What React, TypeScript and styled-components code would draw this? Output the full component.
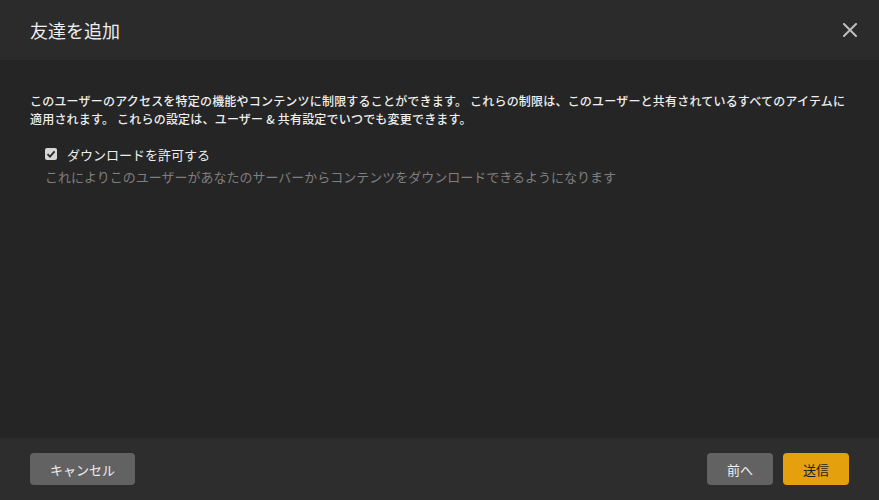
import React from 'react';
import styled, { createGlobalStyle } from 'styled-components';

const GlobalStyle = createGlobalStyle`
  html, body {
    margin: 0;
    padding: 0;
    background: #252525;
  }
  body {
    font-family: "Noto Sans CJK JP", "Noto Sans", sans-serif;
  }
`;

const App: React.FC = () => {
  return (
    <>
      <GlobalStyle />
      <Modal>
        <Header>
          <Title>友達を追加</Title>
          <CloseButton aria-label="close">
            <svg width="14" height="14" viewBox="0 0 14 14">
              <path d="M1 1L13 13M13 1L1 13" stroke="#bdbdbd" strokeWidth="2" strokeLinecap="square" />
            </svg>
          </CloseButton>
        </Header>
        <Body>
          <Intro>
            このユーザーのアクセスを特定の機能やコンテンツに制限することができます。 これらの制限は、このユーザーと共有されているすべてのアイテムに適用されます。 これらの設定は、ユーザー &amp; 共有設定でいつでも変更できます。
          </Intro>
          <Option>
            <CheckRow>
              <CheckBox>
                <svg width="10" height="10" viewBox="0 0 10 10">
                  <path d="M1.5 5.2L4 7.6L8.6 2.4" stroke="#2a2a2a" strokeWidth="1.8" fill="none" />
                </svg>
              </CheckBox>
              <Label>ダウンロードを許可する</Label>
            </CheckRow>
            <Hint>これによりこのユーザーがあなたのサーバーからコンテンツをダウンロードできるようになります</Hint>
          </Option>
        </Body>
        <Footer>
          <Button>キャンセル</Button>
          <Actions>
            <Button>前へ</Button>
            <Button $primary>送信</Button>
          </Actions>
        </Footer>
      </Modal>
    </>
  );
};

const Modal = styled.div`
  width: 879px;
  height: 500px;
  display: flex;
  flex-direction: column;
  background: #252525;
`;

const Header = styled.div`
  height: 60px;
  flex-shrink: 0;
  display: flex;
  align-items: center;
  justify-content: space-between;
  padding: 0 22px 0 30px;
  background: #2b2b2b;
  box-sizing: border-box;
`;

const Title = styled.h1`
  margin: 0;
  font-size: 18px;
  font-weight: 400;
  color: #eeeeee;
`;

const CloseButton = styled.button`
  background: none;
  border: none;
  padding: 0;
  display: flex;
  cursor: pointer;
`;

const Body = styled.div`
  flex: 1;
  padding: 32px 30px 0;
`;

const Intro = styled.p`
  margin: 0;
  font-size: 12px;
  letter-spacing: 0.2px;
  line-height: 18px;
  font-weight: 500;
  color: #eeeeee;
`;

const Option = styled.div`
  margin-top: 16px;
  padding-left: 15px;
`;

const CheckRow = styled.label`
  display: flex;
  align-items: center;
  gap: 10px;
  height: 20px;
`;

const CheckBox = styled.span`
  width: 12px;
  height: 12px;
  border-radius: 2px;
  background: #d6d6d6;
  display: flex;
  align-items: center;
  justify-content: center;
`;

const Label = styled.span`
  font-size: 13px;
  color: #eeeeee;
`;

const Hint = styled.div`
  margin-top: 2px;
  font-size: 13px;
  line-height: 22px;
  color: #7f7f7f;
`;

const Footer = styled.div`
  height: 62px;
  flex-shrink: 0;
  display: flex;
  align-items: center;
  justify-content: space-between;
  padding: 0 30px;
  background: #2d2d2d;
`;

const Actions = styled.div`
  display: flex;
  gap: 10px;
`;

const Button = styled.button<{ $primary?: boolean }>`
  height: 32px;
  min-width: 66px;
  padding: 0 20px;
  border: none;
  border-radius: 4px;
  font-family: inherit;
  font-size: 13px;
  cursor: pointer;
  background: ${p => (p.$primary ? '#e5a00d' : '#626262')};
  color: ${p => (p.$primary ? '#1f1f1f' : '#eeeeee')};
`;

export default App;
